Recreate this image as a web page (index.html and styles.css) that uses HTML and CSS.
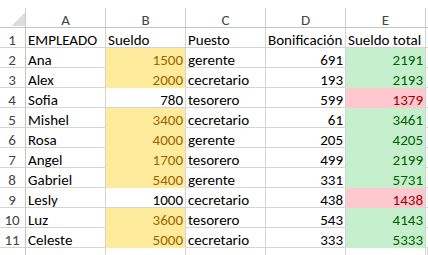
FILE: index.html
```html
<!DOCTYPE html>
<html lang="es">
<head>
<meta charset="utf-8">
<title>Hoja de cálculo</title>
<link rel="stylesheet" href="styles.css">
</head>
<body>
<div class="sheet">
  <div class="row head">
    <div class="cell corner"></div>
    <div class="cell col">A</div>
    <div class="cell col">B</div>
    <div class="cell col">C</div>
    <div class="cell col">D</div>
    <div class="cell col">E</div>
    <div class="cell col"></div>
  </div>
  <div class="row">
    <div class="cell num">1</div>
    <div class="cell">EMPLEADO</div>
    <div class="cell">Sueldo</div>
    <div class="cell">Puesto</div>
    <div class="cell">Bonificación</div>
    <div class="cell">Sueldo total</div>
    <div class="cell"></div>
  </div>
  <div class="row">
    <div class="cell num">2</div>
    <div class="cell">Ana</div>
    <div class="cell n y">1500</div>
    <div class="cell">gerente</div>
    <div class="cell n">691</div>
    <div class="cell n g">2191</div>
    <div class="cell"></div>
  </div>
  <div class="row">
    <div class="cell num">3</div>
    <div class="cell">Alex</div>
    <div class="cell n y">2000</div>
    <div class="cell">cecretario</div>
    <div class="cell n">193</div>
    <div class="cell n g">2193</div>
    <div class="cell"></div>
  </div>
  <div class="row">
    <div class="cell num">4</div>
    <div class="cell">Sofia</div>
    <div class="cell n">780</div>
    <div class="cell">tesorero</div>
    <div class="cell n">599</div>
    <div class="cell n r">1379</div>
    <div class="cell"></div>
  </div>
  <div class="row">
    <div class="cell num">5</div>
    <div class="cell">Mishel</div>
    <div class="cell n y">3400</div>
    <div class="cell">cecretario</div>
    <div class="cell n">61</div>
    <div class="cell n g">3461</div>
    <div class="cell"></div>
  </div>
  <div class="row">
    <div class="cell num">6</div>
    <div class="cell">Rosa</div>
    <div class="cell n y">4000</div>
    <div class="cell">gerente</div>
    <div class="cell n">205</div>
    <div class="cell n g">4205</div>
    <div class="cell"></div>
  </div>
  <div class="row">
    <div class="cell num">7</div>
    <div class="cell">Angel</div>
    <div class="cell n y">1700</div>
    <div class="cell">tesorero</div>
    <div class="cell n">499</div>
    <div class="cell n g">2199</div>
    <div class="cell"></div>
  </div>
  <div class="row">
    <div class="cell num">8</div>
    <div class="cell">Gabriel</div>
    <div class="cell n y">5400</div>
    <div class="cell">gerente</div>
    <div class="cell n">331</div>
    <div class="cell n g">5731</div>
    <div class="cell"></div>
  </div>
  <div class="row">
    <div class="cell num">9</div>
    <div class="cell">Lesly</div>
    <div class="cell n">1000</div>
    <div class="cell">cecretario</div>
    <div class="cell n">438</div>
    <div class="cell n r">1438</div>
    <div class="cell"></div>
  </div>
  <div class="row">
    <div class="cell num">10</div>
    <div class="cell">Luz</div>
    <div class="cell n y">3600</div>
    <div class="cell">tesorero</div>
    <div class="cell n">543</div>
    <div class="cell n g">4143</div>
    <div class="cell"></div>
  </div>
  <div class="row">
    <div class="cell num">11</div>
    <div class="cell">Celeste</div>
    <div class="cell n y">5000</div>
    <div class="cell">cecretario</div>
    <div class="cell n">333</div>
    <div class="cell n g">5333</div>
    <div class="cell"></div>
  </div>
  <div class="row tail">
    <div class="cell num"></div>
    <div class="cell"></div>
    <div class="cell"></div>
    <div class="cell"></div>
    <div class="cell"></div>
    <div class="cell"></div>
    <div class="cell"></div>
  </div>
</div>
</body>
</html>
```
FILE: styles.css
```css
html, body {
  margin: 0;
  padding: 0;
  background: #ffffff;
  overflow: hidden;
}

body {
  font-family: Carlito, Calibri, Lato, "Liberation Sans", sans-serif;
  font-size: 15px;
  color: #000000;
}

.sheet {
  display: flex;
  flex-direction: column;
  margin-top: 8px;
  width: 428px;
}

.row {
  display: grid;
  grid-template-columns: 26px repeat(5, 80px) 2px;
  height: 20px;
}

.tail {
  height: 7px;
}

.cell {
  box-sizing: border-box;
  height: 20px;
  padding: 4px 2px 0 2px;
  line-height: 16px;
  white-space: nowrap;
  overflow: hidden;
  border-right: 1px solid #d4d4d4;
  border-bottom: 1px solid #d4d4d4;
}

.tail .cell {
  height: 7px;
  padding: 0;
  border-bottom: none;
}

.head .cell {
  text-align: center;
  color: #444444;
  border-right-color: #cdcdcd;
  border-bottom-color: #c4c4c4;
}

.corner {
  background-image: linear-gradient(to bottom right, transparent 50%, #dcdcdc 50%);
  background-size: 14px 14px;
  background-position: right 0 bottom 1px;
  background-repeat: no-repeat;
}

.num {
  text-align: center;
  color: #444444;
  padding-left: 0;
  padding-right: 1px;
  border-right-color: #c4c4c4;
}

.n {
  text-align: right;
}

.y {
  background: #ffeb9c;
  color: #9c6500;
  border-bottom-color: #ffeb9c;
}

.g {
  background: #c6efce;
  color: #006100;
  border-bottom-color: #c6efce;
}

.r {
  background: #ffc7ce;
  color: #9c0006;
  border-bottom-color: #ffc7ce;
}
```
